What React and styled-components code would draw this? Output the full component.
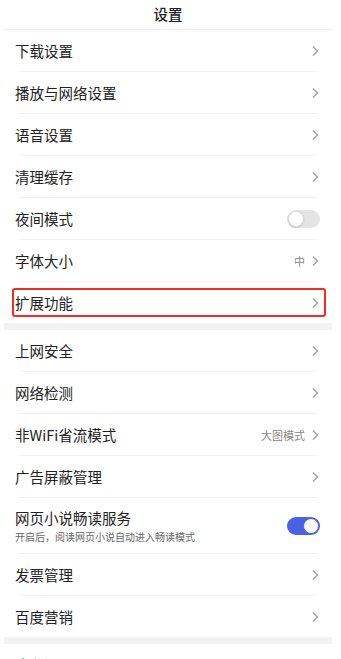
import styled, { createGlobalStyle } from 'styled-components';

const GlobalStyle = createGlobalStyle`
  html, body {
    margin: 0;
    padding: 0;
    background: #fff;
  }
  body {
    font-family: "Noto Sans CJK SC", "Noto Sans", sans-serif;
    color: #222;
  }
`;

const sections = [
  [
    { label: '下载设置', type: 'link' },
    { label: '播放与网络设置', type: 'link' },
    { label: '语音设置', type: 'link' },
    { label: '清理缓存', type: 'link' },
    { label: '夜间模式', type: 'switch', on: false },
    { label: '字体大小', type: 'link', value: '中' },
    { label: '扩展功能', type: 'link', highlight: true },
  ],
  [
    { label: '上网安全', type: 'link' },
    { label: '网络检测', type: 'link' },
    { label: '非WiFi省流模式', type: 'link', value: '大图模式' },
    { label: '广告屏蔽管理', type: 'link' },
    { label: '网页小说畅读服务', type: 'switch', on: true, desc: '开启后，阅读网页小说自动进入畅读模式' },
    { label: '发票管理', type: 'link' },
    { label: '百度营销', type: 'link' },
  ],
  [
    { label: '隐私设置', type: 'link' },
  ],
];

const Chevron = () => (
  <ChevronIcon viewBox="0 0 10 12" width="10" height="12">
    <path d="M3 1.5 L7.5 6 L3 10.5" fill="none" stroke="#9a9a9a" strokeWidth="1.2" />
  </ChevronIcon>
);

const App = () => {
  return (
    <Page>
      <GlobalStyle />
      <Header>设置</Header>

      {sections.map((items, si) => (
        <div key={si}>
          {si > 0 && <Band />}
          {items.map((item, i) => (
            <div key={item.label}>
              {i > 0 && <Divider />}
              <Row $tall={!!item.desc} $highlight={item.highlight}>
                <Texts>
                  <Label>{item.label}</Label>
                  {item.desc && <Desc>{item.desc}</Desc>}
                </Texts>
                {item.type === 'link' ? (
                  <Trail>
                    {item.value && <Value>{item.value}</Value>}
                    <Chevron />
                  </Trail>
                ) : (
                  <Switch $on={item.on}>
                    <Knob $on={item.on} />
                  </Switch>
                )}
              </Row>
            </div>
          ))}
        </div>
      ))}
    </Page>
  );
};

export default App;

const Page = styled.div`
  margin-left: 4px;
  width: 328px;
  height: 659px;
  overflow: hidden;
  background: #fff;
`;

const Header = styled.header`
  height: 27px;
  padding-bottom: 2px;
  border-bottom: 1px solid #efefef;
  display: flex;
  align-items: center;
  justify-content: center;
  font-size: 14.5px;
  font-weight: 500;
  color: #222;
`;

const Band = styled.div`
  height: 7px;
  background: #f3f3f3;
`;

const Divider = styled.div`
  height: 1px;
  margin: 0 16px;
  background: #f1f1f1;
`;

const Row = styled.div`
  position: relative;
  height: ${(p) => (p.$tall ? '55px' : '41px')};
  display: flex;
  align-items: center;
  justify-content: space-between;
  padding: 0 12px 0 11px;

  ${(p) =>
    p.$highlight &&
    `
    &::after {
      content: '';
      position: absolute;
      top: 6px;
      bottom: 6px;
      left: 8px;
      right: 6px;
      border: 2px solid #f52a23;
      border-radius: 3px;
    }
  `}
`;

const Texts = styled.div`
  display: flex;
  flex-direction: column;
  gap: 2px;
`;

const Label = styled.div`
  font-size: 14.5px;
  line-height: 20px;
  color: #222;
`;

const Desc = styled.div`
  font-size: 10px;
  line-height: 14px;
  color: #666;
`;

const Trail = styled.div`
  display: flex;
  align-items: center;
  gap: 5px;
`;

const Value = styled.span`
  font-size: 11px;
  color: #888;
`;

const ChevronIcon = styled.svg`
  display: block;
`;

const Switch = styled.div`
  width: 33px;
  height: 18px;
  border-radius: 9px;
  background: ${(p) => (p.$on ? '#4a62e4' : '#e4e4e4')};
  display: flex;
  align-items: center;
  justify-content: ${(p) => (p.$on ? 'flex-end' : 'flex-start')};
  padding: 0 1px;
  box-sizing: border-box;
`;

const Knob = styled.div`
  width: 16px;
  height: 16px;
  border-radius: 50%;
  background: #fff;
  box-sizing: border-box;
  border: 1px solid ${(p) => (p.$on ? '#4a62e4' : '#dcdcdc')};
  box-shadow: ${(p) => (p.$on ? 'none' : '0 1px 2px rgba(0,0,0,0.15)')};
`;
